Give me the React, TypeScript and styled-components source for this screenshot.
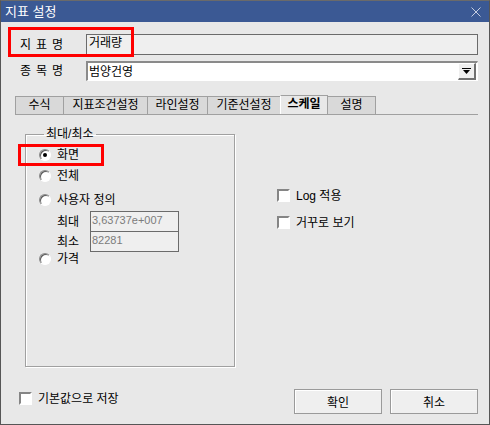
import React from "react";
import styled, { createGlobalStyle, css } from "styled-components";

const Global = createGlobalStyle`
  html, body { margin: 0; padding: 0; background: #e8e8e8; }
  body { font-family: "Liberation Sans", "Noto Sans CJK KR", sans-serif; font-size: 12px; color: #000; }
  * { box-sizing: border-box; }
`;

const Window = styled.div`
  position: relative;
  width: 490px;
  height: 425px;
  border: 1px solid #565656;
  border-top-color: #6a6a6a;
  background: #e8e8e8;
  display: flex;
  flex-direction: column;
`;

const TitleBar = styled.div`
  height: 21px;
  flex: none;
  background: #3b5994;
  color: #fff;
  display: flex;
  align-items: center;
  justify-content: space-between;
  padding: 0 8px 0 4px;
  font-size: 13px;
  line-height: 21px;
`;

const Content = styled.div`
  flex: 1;
  display: flex;
  flex-direction: column;
  padding: 12px 11px 10px 14px;
`;

const FormRow = styled.div<{ $gap?: number }>`
  display: flex;
  align-items: center;
  margin-top: ${(p) => p.$gap ?? 0}px;
`;

const RowLabel = styled.div`
  width: 71px;
  padding-left: 5px;
  letter-spacing: 5px;
  line-height: 14px;
`;

const ReadField = styled.div`
  flex: 1;
  height: 21px;
  border: 1px solid #6b6b6b;
  background: #efefef;
  padding: 1px 2px;
  line-height: 14px;
`;

const Combo = styled.div`
  flex: 1;
  height: 20px;
  display: flex;
  align-items: center;
  background: #fff;
  border-top: 2px solid #8a8a8a;
  border-left: 2px solid #8a8a8a;
  border-right: 1px solid #fff;
  border-bottom: 1px solid #fff;
  padding-left: 1px;
  line-height: 14px;
`;

const ComboText = styled.div`
  flex: 1;
`;

const ComboButton = styled.div`
  width: 18px;
  height: 17px;
  margin-right: 1px;
  background: #efefef;
  border-top: 1px solid #fff;
  border-left: 1px solid #fff;
  border-right: 2px solid #707070;
  border-bottom: 2px solid #707070;
  display: flex;
  align-items: center;
  justify-content: center;
`;

const Tabs = styled.div`
  display: flex;
  height: 19px;
  margin-top: 15px;
  border-bottom: 1px solid #a0a0a0;
`;

const Tab = styled.div<{ $w: number; $active?: boolean }>`
  width: ${(p) => p.$w}px;
  height: 18px;
  margin-left: -1px;
  border: 1px solid #a0a0a0;
  border-bottom: none;
  background: #d9d9d9;
  text-align: center;
  line-height: 16px;
  &:first-child { margin-left: 0; }
  ${(p) =>
    p.$active &&
    css`
      background: #e8e8e8;
      font-weight: bold;
      height: 19px;
      margin-top: -1px;
      border-left-color: #fff;
      position: relative;
      z-index: 1;
    `}
`;

const Pane = styled.div`
  display: flex;
  align-items: flex-start;
  padding-top: 12px;
`;

const Group = styled.fieldset`
  margin: 0 0 0 10px;
  width: 210px;
  height: 240px;
  padding: 7px 0 0 13px;
  min-width: 0;
  border: 1px solid #a0a0a0;
  box-shadow: 1px 1px 0 #fff, inset 1px 1px 0 #fff;
`;

const Legend = styled.legend`
  margin-left: 5px;
  padding: 0 2px;
  line-height: 14px;
`;

const Col = styled.div`
  display: flex;
  flex-direction: column;
`;

const ChoiceRow = styled.div<{ $gap?: number }>`
  display: flex;
  align-items: center;
  gap: 6px;
  height: 14px;
  line-height: 14px;
  margin-top: ${(p) => p.$gap ?? 0}px;
`;

const Radio = styled.span<{ $on?: boolean }>`
  width: 12px;
  height: 12px;
  flex: none;
  border-radius: 50%;
  background: #fff;
  border: 1px solid;
  border-color: #8a8a8a #fff #fff #8a8a8a;
  box-shadow: inset 1px 1px 0 #5a5a5a;
  display: flex;
  align-items: center;
  justify-content: center;
  &::after {
    content: "";
    display: ${(p) => (p.$on ? "block" : "none")};
    width: 4px;
    height: 4px;
    border-radius: 50%;
    background: #000;
  }
`;

const ValueRow = styled.div<{ $overlap?: boolean }>`
  display: flex;
  align-items: center;
  padding-left: 18px;
  margin-top: ${(p) => (p.$overlap ? -1 : 4)}px;
`;

const ValueLabel = styled.div`
  width: 33px;
  line-height: 14px;
`;

const ValueBox = styled.div`
  width: 89px;
  height: 21px;
  border: 1px solid #6b6b6b;
  background: #efefef;
  color: #7c7c7c;
  font-size: 11px;
  line-height: 14px;
  padding: 1px 1px;
`;

const Check = styled.span`
  width: 13px;
  height: 13px;
  flex: none;
  background: #fff;
  border: 2px solid;
  border-color: #858585 #fff #fff #858585;
`;

const Checks = styled.div`
  display: flex;
  flex-direction: column;
  gap: 14px;
  margin: 62px 0 0 42px;
`;

const CheckRow = styled.div`
  display: flex;
  align-items: center;
  gap: 6px;
  height: 13px;
  line-height: 14px;
`;

const Footer = styled.div`
  margin-top: auto;
  display: flex;
  align-items: flex-start;
`;

const FooterCheck = styled(CheckRow)`
  margin: 3px 0 0 4px;
  flex: 1;
`;

const Button = styled.button`
  width: 88px;
  height: 25px;
  margin-left: 8px;
  background: #efefef;
  border: 1px solid #9a9a9a;
  box-shadow: inset 1px 1px 0 #fff;
  font: inherit;
  font-size: 12px;
  color: #000;
  padding: 0;
`;

const Highlight = styled.div<{ $x: number; $y: number; $w: number; $h: number }>`
  position: absolute;
  left: ${(p) => p.$x - 1}px;
  top: ${(p) => p.$y - 1}px;
  width: ${(p) => p.$w}px;
  height: ${(p) => p.$h}px;
  border: 3px solid #f00;
  pointer-events: none;
`;

export default function App() {
  return (
    <>
      <Global />
      <Window>
        <TitleBar>
          <span>지표 설정</span>
          <svg width="10" height="10" viewBox="0 0 10 10">
            <path d="M0.5 0.5 L9.5 9.5 M9.5 0.5 L0.5 9.5" stroke="#c5cde0" strokeWidth="1" />
          </svg>
        </TitleBar>
        <Content>
          <FormRow>
            <RowLabel>지표명</RowLabel>
            <ReadField>거래량</ReadField>
          </FormRow>
          <FormRow $gap={6}>
            <RowLabel>종목명</RowLabel>
            <Combo>
              <ComboText>범양건영</ComboText>
              <ComboButton>
                <svg width="9" height="6" viewBox="0 0 9 6">
                  <path d="M0 0 H9 V1 H0 Z M1 2 H8 L4.5 6 Z" fill="#000" />
                </svg>
              </ComboButton>
            </Combo>
          </FormRow>
          <Tabs>
            <Tab $w={49}>수식</Tab>
            <Tab $w={85}>지표조건설정</Tab>
            <Tab $w={61}>라인설정</Tab>
            <Tab $w={74}>기준선설정</Tab>
            <Tab $w={48} $active>스케일</Tab>
            <Tab $w={49}>설명</Tab>
          </Tabs>
          <Pane>
            <Group>
              <Legend>최대/최소</Legend>
              <Col>
                <ChoiceRow>
                  <Radio $on />
                  화면
                </ChoiceRow>
                <ChoiceRow $gap={7}>
                  <Radio />
                  전체
                </ChoiceRow>
                <ChoiceRow $gap={10}>
                  <Radio />
                  사용자 정의
                </ChoiceRow>
                <ValueRow>
                  <ValueLabel>최대</ValueLabel>
                  <ValueBox>3,63737e+007</ValueBox>
                </ValueRow>
                <ValueRow $overlap>
                  <ValueLabel>최소</ValueLabel>
                  <ValueBox>82281</ValueBox>
                </ValueRow>
                <ChoiceRow $gap={0}>
                  <Radio />
                  가격
                </ChoiceRow>
              </Col>
            </Group>
            <Checks>
              <CheckRow>
                <Check />
                Log 적용
              </CheckRow>
              <CheckRow>
                <Check />
                거꾸로 보기
              </CheckRow>
            </Checks>
          </Pane>
          <Footer>
            <FooterCheck>
              <Check />
              기본값으로 저장
            </FooterCheck>
            <Button>확인</Button>
            <Button>취소</Button>
          </Footer>
        </Content>
        <Highlight $x={8} $y={27} $w={126} $h={30} />
        <Highlight $x={18} $y={144} $w={86} $h={22} />
      </Window>
    </>
  );
}
